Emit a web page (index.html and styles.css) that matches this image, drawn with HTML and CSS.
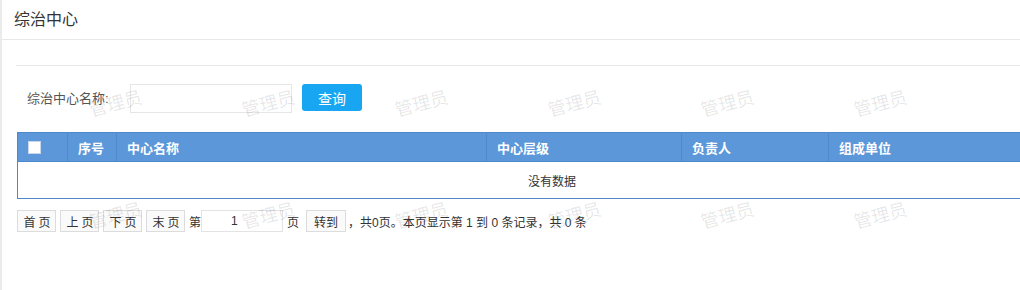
FILE: index.html
```html
<!DOCTYPE html>
<html lang="zh-CN">
<head>
<meta charset="utf-8">
<title>综治中心</title>
<link rel="stylesheet" href="styles.css">
</head>
<body>
<div class="page">
  <div class="page-header">综治中心</div>
  <div class="content">
    <div class="search">
      <label class="search-label">综治中心名称:</label>
      <input class="search-input" type="text">
      <button class="btn-primary">查询</button>
    </div>
    <table class="grid">
      <colgroup>
        <col class="c-check"><col class="c-no"><col class="c-name"><col class="c-level"><col class="c-owner"><col class="c-unit">
      </colgroup>
      <thead>
        <tr>
          <th class="th-check"><span class="checkbox"></span></th>
          <th>序号</th>
          <th>中心名称</th>
          <th>中心层级</th>
          <th>负责人</th>
          <th>组成单位</th>
        </tr>
      </thead>
      <tbody>
        <tr><td colspan="6" class="empty">没有数据</td></tr>
      </tbody>
    </table>
    <div class="pager">
      <button class="pg-btn">首页</button>
      <button class="pg-btn">上页</button>
      <button class="pg-btn">下页</button>
      <button class="pg-btn">末页</button>
      <span class="pg-text">第</span>
      <input class="pg-input" type="text" value="1">
      <span class="pg-text pg-ye">页</span>
      <button class="pg-btn pg-go">转到</button>
      <span class="pg-info">，共0页。本页显示第 1 到 0 条记录，共 0 条</span>
    </div>
  </div>
  <div class="watermarks">
    <span class="wm" style="left:86px;top:89px">管理员</span>
    <span class="wm" style="left:239px;top:89px">管理员</span>
    <span class="wm" style="left:392px;top:89px">管理员</span>
    <span class="wm" style="left:545px;top:89px">管理员</span>
    <span class="wm" style="left:698px;top:89px">管理员</span>
    <span class="wm" style="left:851px;top:89px">管理员</span>
    <span class="wm" style="left:86px;top:201px">管理员</span>
    <span class="wm" style="left:239px;top:201px">管理员</span>
    <span class="wm" style="left:392px;top:201px">管理员</span>
    <span class="wm" style="left:545px;top:201px">管理员</span>
    <span class="wm" style="left:698px;top:201px">管理员</span>
    <span class="wm" style="left:851px;top:201px">管理员</span>
  </div>
</div>
</body>
</html>
```

FILE: styles.css
```css
html, body {
  margin: 0;
  padding: 0;
  overflow: hidden;
  background: #fff;
}
body {
  font-family: "Liberation Sans", "Noto Sans CJK SC", sans-serif;
  color: #333;
  font-size: 12px;
}
.page {
  position: relative;
  width: 1018px;
  height: 290px;
  border-left: 2px solid #ebebeb;
  overflow: hidden;
}
.page-header {
  height: 39px;
  line-height: 39px;
  padding-left: 12px;
  font-size: 16px;
  color: #333;
  border-bottom: 1px solid #e8e8e8;
}
.content {
  padding: 25px 0 0 14px;
}
.search {
  display: flex;
  align-items: flex-start;
  border-top: 1px solid #e6e6e6;
  padding: 18px 0 0 11px;
  height: 48px;
  box-sizing: content-box;
}
.search-label {
  font-size: 13px;
  color: #555;
  line-height: 30px;
  width: 103px;
  flex: none;
}
.search-input {
  width: 162px;
  height: 29px;
  box-sizing: border-box;
  border: 1px solid #e6e6e6;
  margin: 0;
  padding: 0 4px;
  outline: none;
}
.btn-primary {
  margin-left: 10px;
  width: 60px;
  height: 27px;
  border: 0;
  border-radius: 3px;
  background: #18a6f2;
  color: #fff;
  font-size: 14px;
  font-family: "Liberation Sans", "Noto Sans CJK SC", sans-serif;
  padding: 0;
}
.grid {
  width: 1070px;
  border-collapse: collapse;
  table-layout: fixed;
  margin-left: 1px;
  border: 1px solid #4f87c9;
}
.c-check { width: 50px; }
.c-no { width: 49px; }
.c-name { width: 370px; }
.c-level { width: 195px; }
.c-owner { width: 147px; }
.grid thead tr {
  background: #5b97d9;
  height: 29px;
}
.grid th {
  color: #fff;
  font-size: 13px;
  font-weight: bold;
  text-align: left;
  padding: 0 0 0 10px;
  border-left: 1px solid #5189cb;
  border-bottom: 1px solid #4f87c9;
}
.grid th.th-check {
  border-left: 0;
  padding-left: 10px;
}
.checkbox {
  display: block;
  width: 11px;
  height: 11px;
  background: #fff;
  border: 1px solid #c9d7e8;
}
.empty {
  height: 36px;
  text-align: center;
  font-size: 12px;
  color: #333;
  padding: 0;
}
.pager {
  display: flex;
  align-items: center;
  margin-top: 11px;
  margin-left: 1px;
  height: 22px;
}
.pg-btn {
  height: 22px;
  box-sizing: border-box;
  border: 1px solid #dcdcdc;
  background: #fafafa;
  color: #333;
  font-size: 12px;
  font-family: "Liberation Sans", "Noto Sans CJK SC", sans-serif;
  letter-spacing: 3px;
  padding: 0 1px 0 5px;
  margin: 0 4px 0 0;
  width: 39px;
}
.pg-text {
  font-size: 12px;
  color: #333;
}
.pg-input {
  width: 82px;
  height: 22px;
  box-sizing: border-box;
  border: 1px solid #e3e3e3;
  margin: 0 4px 0 0;
  padding: 0 0 0 29px;
  font-size: 12px;
  color: #333;
  outline: none;
  font-family: "Liberation Sans", "Noto Sans CJK SC", sans-serif;
}
.pg-ye {
  margin-right: 7px;
}
.pg-go {
  width: 40px;
  margin-right: 2px;
  letter-spacing: 0;
  padding: 0;
}
.pg-info {
  font-size: 12px;
  color: #333;
}
.watermarks {
  position: absolute;
  inset: 0;
  pointer-events: none;
}
.wm {
  position: absolute;
  font-size: 18px;
  color: rgba(0, 0, 0, 0.1);
  transform: rotate(-15deg);
  transform-origin: center;
  white-space: nowrap;
  font-family: "Noto Sans CJK SC", sans-serif;
}
```
